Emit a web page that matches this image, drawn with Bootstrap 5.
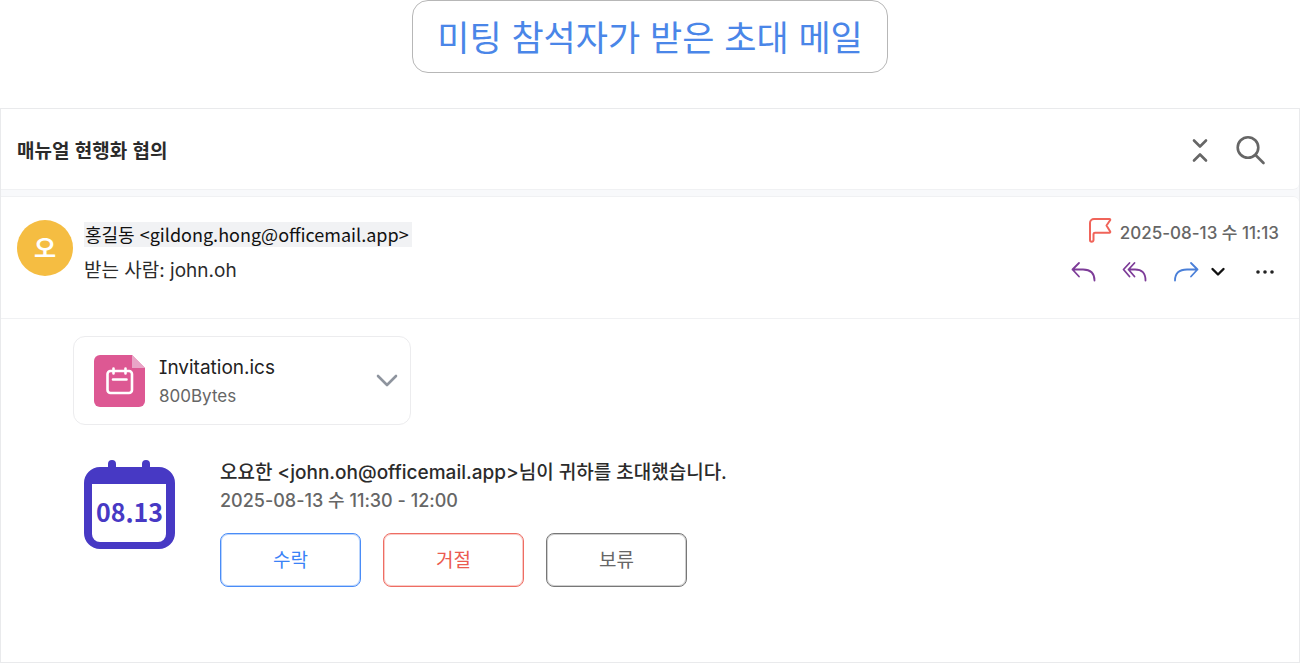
<!DOCTYPE html>
<html lang="ko">
<head>
<meta charset="utf-8">
<meta name="viewport" content="width=device-width, initial-scale=1">
<title>매뉴얼 현행화 협의</title>
<link href="https://cdn.jsdelivr.net/npm/bootstrap@5.3.0/dist/css/bootstrap.min.css" rel="stylesheet">
<style>
  body { font-family: "Noto Sans CJK KR", sans-serif; font-size: 19px; line-height: 28px; color: #2b2b2b; background: #fff; }
  svg { display: block; fill: none; stroke-linecap: round; stroke-linejoin: round; }
  .latin { font-family: Inter, "Noto Sans CJK KR", sans-serif; font-feature-settings: "cv08"; }
  .caption-box { border: 1px solid #b7b7b7; border-radius: 16px; padding: 8px 24px 10px; }
  .caption-box h1 { font-size: 35px; line-height: 53px; font-weight: 400; color: #4a86e8; }
  .mail { border: 1px solid #e9eaec; background: #f8f9fb; margin-top: 35px; }
  .pane { background: #fff; border-bottom: 1px solid #f0f1f3; }
  .subject { border-radius: 0 0 6px 0; padding: 26px 33px 24px 16px; }
  .subject h2 { font-size: 19px; line-height: 28px; font-weight: 700; }
  .tools { gap: 28px; }
  .sender { margin-top: 6px; border-top: 1px solid #f0f1f3; border-radius: 0 6px 0 0; padding: 23px 20px 33px 16px; }
  .avatar { width: 56px; height: 56px; background: #f5bd42; color: #fff; font-size: 24px; font-weight: 700; padding-bottom: 3px; }
  .people { margin-left: 11px; padding-top: 2px; }
  .from { font-size: 18px; line-height: 25px; color: #111; background: #f1f2f4; padding: 0 3px 0 1px; }
  .to { margin-top: 10px; }
  .stamp { font-size: 17px; line-height: 26px; font-weight: 500; color: #666; }
  .icon-btn { border: 0; padding: 0; background: none; }
  .flag-row { gap: 8px; }
  .actions { gap: 25px; margin-top: 15px; padding-right: 4px; }
  .more { margin-left: -14px; }
  .dots { margin-left: 4px; }
  .content { padding: 17px 16px 40px 72px; background: #fff; }
  .attachment { width: 338px; border: 1px solid #ececee; border-radius: 12px; padding: 15px 12px 14px 19px; }
  .file-info { margin-left: 12px; padding-top: 2px; }
  .file-name { color: #222; }
  .file-size { font-size: 17px; color: #666; }
  .invite { margin-top: 33px; padding-left: 11px; gap: 45px; }
  .day { position: relative; width: 91px; height: 91px; margin-top: 2px; color: #4739c4; }
  .day time { position: absolute; inset: 36px 0 auto; text-align: center; font-weight: 700; font-size: 25px; line-height: 30px; }
  .details { padding-top: 1px; }
  .who { font-weight: 500; }
  .when { font-size: 18px; font-weight: 500; color: #666; }
  .answers { gap: 22px; margin-top: 18px; }
  .answers .btn { width: 141px; height: 54px; border-radius: 8px; font-size: 19px; background: #fff; padding: 0 0 2px; }
  .answers .yes { color: #3a82f7; border-color: #4a8cf7; box-shadow: inset 0 0 0 1px #b9d4fc; }
  .answers .no { color: #eb5a4f; border-color: #ee6d63; box-shadow: inset 0 0 0 1px #f9cbc7; }
  .answers .hold { color: #666; border-color: #777; box-shadow: inset 0 0 0 1px #cfcfcf; }
</style>
</head>
<body>
<div class="d-flex flex-column min-vh-100">
  <header class="d-flex justify-content-center">
    <div class="caption-box"><h1 class="m-0">미팅 참석자가 받은 초대 메일</h1></div>
  </header>
  <main class="mail flex-grow-1 d-flex flex-column">
    <section class="pane subject d-flex align-items-center justify-content-between">
      <h2 class="m-0">매뉴얼 현행화 협의</h2>
      <div class="d-flex align-items-center tools">
        <button class="icon-btn" aria-label="접기"><svg width="16" height="26" viewBox="0 0 16 26" stroke="#666" stroke-width="2.6"><path d="M2 3.5l6 6 6-6M2 23.500l6-6 6 6"/></svg></button>
        <button class="icon-btn" aria-label="검색"><svg width="30" height="30" viewBox="0 0 30 30" stroke="#666" stroke-width="2.6"><circle cx="12" cy="12.500" r="10.300"/><path d="M19.500 20l8 8"/></svg></button>
      </div>
    </section>
    <section class="pane sender d-flex justify-content-between">
      <div class="d-flex">
        <div class="avatar rounded-circle d-flex align-items-center justify-content-center">오</div>
        <div class="people">
          <div class="from">홍길동 &lt;gildong.hong@officemail.app&gt;</div>
          <div class="to latin">받는 사람: john.oh</div>
        </div>
      </div>
      <div class="meta">
        <div class="d-flex justify-content-end flag-row">
          <button class="icon-btn" aria-label="중요 표시"><svg width="24" height="26" viewBox="0 5 24 26" overflow="visible" stroke="#f0645a" stroke-width="2"><path d="M5.500 19v6a1.750 1.750 0 0 1-3.500 0V8a4 4 0 0 1 4-4h15.500a.8.8 0 0 1 .6 1.300L18.500 10.500l3.700 6a.8.8 0 0 1-.7 1.200H7A1.500 1.500 0 0 0 5.500 19"/></svg></button>
          <time class="stamp latin">2025-08-13 수 11:13</time>
        </div>
        <div class="d-flex align-items-center justify-content-end actions">
          <button class="icon-btn" aria-label="답장"><svg width="26" height="22" viewBox="0 0 26 22" stroke="#7d3c98" stroke-width="1.800"><path d="M8 2L1.500 8.500 8 15.500M1.500 8.500H12q11.500 0 11.500 11"/></svg></button>
          <button class="icon-btn" aria-label="전체 답장"><svg width="26" height="22" viewBox="0 0 26 22" stroke="#7d3c98" stroke-width="1.800"><path d="M7.500 2L1.500 8.500l6 7M12.500 2l-6 6.500 6 7M6.500 8.500H13q10.500 0 10.500 11"/></svg></button>
          <button class="icon-btn" aria-label="전달"><svg width="26" height="22" viewBox="0 0 26 22" stroke="#4a7fd8" stroke-width="1.800"><path d="M18 2l6.500 6.500L18 15.500M24.500 8.500H14Q2 8.500 2 19.500"/></svg></button>
          <button class="icon-btn more" aria-label="전달 옵션"><svg width="16" height="10" viewBox="0 0 16 10" stroke="#111" stroke-width="2.400"><path d="M2.500 2l5.500 5.500L13.500 2"/></svg></button>
          <button class="icon-btn dots" aria-label="더 보기"><svg width="20" height="6" viewBox="0 0 20 6" style="fill:#222"><circle cx="3" cy="3" r="1.800"/><circle cx="10" cy="3" r="1.800"/><circle cx="17" cy="3" r="1.800"/></svg></button>
        </div>
      </div>
    </section>
    <section class="content flex-grow-1">
      <div class="attachment d-flex align-items-center">
        <svg width="54" height="54" viewBox="0 0 54 54"><path fill="#dd5893" d="M7 1h32l13 13v33a6 6 0 0 1-6 6H7a6 6 0 0 1-6-6V7a6 6 0 0 1 6-6z"/><path fill="#e9a5c7" d="M39 1l13 13H39z"/><g stroke="#fff" stroke-width="2.600"><rect x="14.500" y="17" width="24.500" height="22" rx="3"/><path d="M20.500 14.500v5M32.500 14.500v5M20 25.500h13.500"/></g></svg>
        <div class="flex-grow-1 file-info latin">
          <div class="file-name">Invitation.ics</div>
          <div class="file-size">800Bytes</div>
        </div>
        <button class="icon-btn" aria-label="첨부 열기"><svg width="22" height="14" viewBox="0 0 22 14" stroke="#8e949e" stroke-width="2.600"><path d="M2 2l9 9 9-9"/></svg></button>
      </div>
      <div class="invite d-flex">
        <div class="day"><svg width="91" height="91" viewBox="0 0 91 91"><path fill="#4739c4" d="M16 7h8V4a4 4 0 0 1 8 0v3h26V4a4 4 0 0 1 8 0v3h9a16 16 0 0 1 16 16v50a16 16 0 0 1-16 16H16A16 16 0 0 1 0 73V23A16 16 0 0 1 16 7z"/><path fill="#fff" d="M8 24h74v50a8 8 0 0 1-8 8H16a8 8 0 0 1-8-8z"/></svg><time>08.13</time></div>
        <div class="details">
          <div class="who latin">오요한 &lt;john.oh@officemail.app&gt;님이 귀하를 초대했습니다.</div>
          <div class="when latin">2025-08-13 수 11:30 - 12:00</div>
          <div class="answers d-flex flex-wrap">
            <button class="btn yes">수락</button>
            <button class="btn no">거절</button>
            <button class="btn hold">보류</button>
          </div>
        </div>
      </div>
    </section>
  </main>
</div>
<script src="https://cdn.jsdelivr.net/npm/bootstrap@5.3.0/dist/js/bootstrap.bundle.min.js"></script>
</body>
</html>
